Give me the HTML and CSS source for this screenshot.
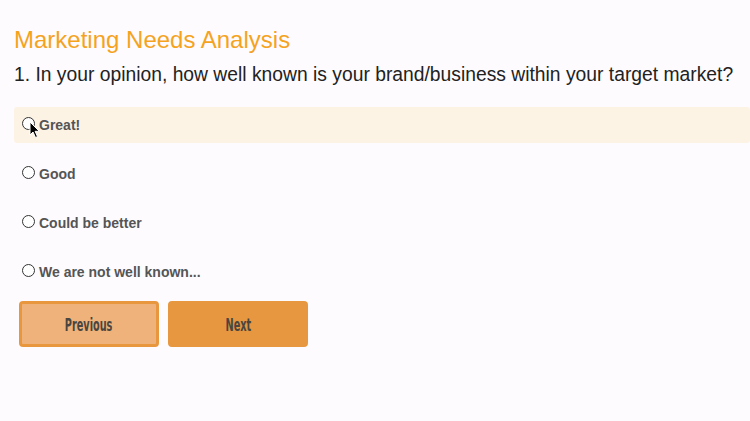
FILE: index.html
```html
<!DOCTYPE html>
<html>
<head>
<meta charset="utf-8">
<link rel="stylesheet" href="styles.css">
</head>
<body>
<div class="page">
  <h1 class="title">Marketing Needs Analysis</h1>
  <h2 class="question">1. In your opinion, how well known is your brand/business within your target market?</h2>
  <div class="options">
    <label class="option hover"><span class="radio"></span><span class="label">Great!</span></label>
    <label class="option"><span class="radio"></span><span class="label">Good</span></label>
    <label class="option"><span class="radio"></span><span class="label">Could be better</span></label>
    <label class="option"><span class="radio"></span><span class="label">We are not well known...</span></label>
  </div>
  <div class="buttons">
    <button class="btn prev"><span class="btn-text">Previous</span></button>
    <button class="btn next"><span class="btn-text">Next</span></button>
  </div>
</div>
<svg class="cursor" width="12" height="18" viewBox="0 0 12 18"><path d="M1 1 L1 14 L4 11 L6.5 16.5 L8.5 15.6 L6.1 10.3 L10.3 10.3 Z" fill="#000" stroke="#fff" stroke-width="1"/></svg>
</body>
</html>
```
FILE: styles.css
```css
html, body { margin: 0; padding: 0; }
body {
  background: #fdfbfe;
  width: 750px;
  height: 421px;
  overflow: hidden;
  position: relative;
  font-family: "Liberation Sans", Arial, sans-serif;
}
.page { padding: 26px 0 0 14px; }
.title {
  margin: 0;
  font-size: 24px;
  font-weight: normal;
  color: #f5a31f;
  line-height: 28px;
}
.question {
  margin: 8px 0 0 0;
  font-size: 19.3px;
  font-weight: normal;
  color: #222;
  line-height: 26px;
  white-space: nowrap;
}
.options { margin-top: 19px; display: flex; flex-direction: column; gap: 13px; }
.option {
  display: flex;
  align-items: center;
  height: 36px;
  padding-left: 8px;
  border-radius: 3px;
}
.option.hover { background: #fdf3e5; }
.radio {
  width: 11px; height: 11px;
  border: 1px solid #333;
  border-radius: 50%;
  background: #fff;
  margin-right: 4px;
  margin-top: -3px;
}
.label { font-size: 14px; font-weight: bold; color: #555; }
.buttons { display: flex; gap: 9px; margin-top: 11px; padding-left: 5px; }
.btn {
  width: 140px;
  height: 46px;
  border-radius: 4px;
  font-family: "DejaVu Sans Condensed", "DejaVu Sans", sans-serif;
  font-stretch: condensed;
  font-weight: bold;
  font-size: 18px;
  color: #4a4540;
  cursor: pointer;
  display: flex;
  align-items: center;
  justify-content: center;
  padding: 0;
}
.btn-text { display: inline-block; transform: scaleX(0.6); }
.prev { background: #efb27a; border: 3px solid #e8973f; }
.next { background: #e6973f; border: 3px solid #e6973f; }
.cursor { position: absolute; left: 29px; top: 121px; }
```
